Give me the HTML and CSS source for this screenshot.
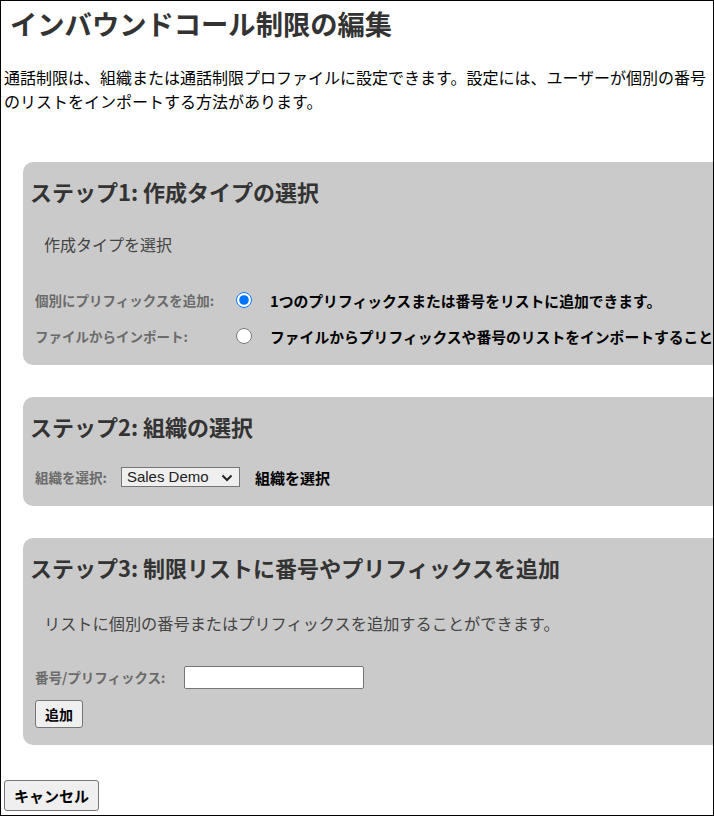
FILE: index.html
```html
<!DOCTYPE html>
<html lang="ja">
<head>
  <meta charset="UTF-8">
  <meta name="viewport" content="width=device-width, initial-scale=1.0">
  <title>インバウンドコール制限の編集</title>
  <link rel="stylesheet" href="styles.css">
</head>
<body>
  <div class="frame">
    <div class="page">
      <h1 class="title">インバウンドコール制限の編集</h1>
      <p class="intro">通話制限は、組織または通話制限プロファイルに設定できます。設定には、ユーザーが個別の番号のリストをインポートする方法があります。</p>

      <section class="step">
        <h2 class="step-title">ステップ1: 作成タイプの選択</h2>
        <p class="step-desc">作成タイプを選択</p>
        <div class="choices">
          <label class="choice">
            <span class="field-label">個別にプリフィックスを追加:</span>
            <input type="radio" name="create-type" checked>
            <span class="choice-text">1つのプリフィックスまたは番号をリストに追加できます。</span>
          </label>
          <label class="choice">
            <span class="field-label">ファイルからインポート:</span>
            <input type="radio" name="create-type">
            <span class="choice-text">ファイルからプリフィックスや番号のリストをインポートすることができます。</span>
          </label>
        </div>
      </section>

      <section class="step">
        <h2 class="step-title">ステップ2: 組織の選択</h2>
        <div class="field-row org-row">
          <label class="field-label" for="org-select">組織を選択:</label>
          <div class="select-wrap">
            <select id="org-select" class="org-select">
              <option>Sales Demo</option>
            </select>
            <svg class="select-arrow" width="12" height="8" viewBox="0 0 12 8">
              <path d="M1.5 1.5 L6 6 L10.5 1.5" fill="none" stroke="#222" stroke-width="2"/>
            </svg>
          </div>
          <span class="hint">組織を選択</span>
        </div>
      </section>

      <section class="step">
        <h2 class="step-title">ステップ3: 制限リストに番号やプリフィックスを追加</h2>
        <p class="step-desc step-desc-wide">リストに個別の番号またはプリフィックスを追加することができます。</p>
        <div class="field-row number-row">
          <label class="field-label" for="number-input">番号/プリフィックス:</label>
          <input type="text" id="number-input" class="text-input">
        </div>
        <button class="btn btn-add">追加</button>
      </section>

      <button class="btn btn-cancel">キャンセル</button>
    </div>
  </div>
</body>
</html>
```

FILE: styles.css
```css
body {
  margin: 0px;
  font-family: "Noto Sans CJK JP", "Noto Sans", sans-serif;
  color: #000;
}
.frame {
  border: 1px solid #000;
  height: 814px;
  overflow: hidden;
}
.page {
  width: 760px;
}
.title {
  margin: 4px 0 0 9px;
  font-size: 27.3px;
  line-height: 36px;
  font-weight: bold;
  color: #333;
}
.intro {
  width: 712px;
  margin: 24px 0 0 3px;
  font-size: 16px;
  line-height: 24px;
}
.step {
  background-color: #cacaca;
  border-radius: 10px 0 0 10px;
  margin: 49px 0 0 22px;
  padding: 14px 0 17px 7px;
}
.step + .step {
  margin-top: 32px;
}
.step-title {
  margin: 0;
  font-size: 22px;
  line-height: 30px;
  font-weight: bold;
  color: #333;
  white-space: nowrap;
}
.step-desc {
  margin: 26px 0 0 14px;
  font-size: 16px;
  line-height: 24px;
  color: #444;
}
.step-desc-wide {
  margin-top: 29px;
  font-size: 16.2px;
}
.choices {
  margin-top: 32px;
  padding-left: 5px;
  display: flex;
  flex-direction: column;
  gap: 12px;
}
.choice {
  display: flex;
  align-items: center;
  height: 24px;
  white-space: nowrap;
}
.choice .field-label {
  flex: 0 0 201px;
}
.choice input {
  flex: 0 0 16px;
  width: 16px;
  height: 16px;
  margin: 0 18px 0 0;
}
.choice-text {
  font-size: 14.8px;
  font-weight: bold;
}
.field-label {
  font-size: 13.5px;
  font-weight: bold;
  color: #6b6b6b;
  white-space: nowrap;
}
.field-row {
  display: flex;
  align-items: center;
  gap: 14px;
  height: 24px;
  padding-left: 5px;
}
.org-row {
  margin-top: 24px;
}
.select-wrap {
  position: relative;
  display: flex;
}
.org-select {
  appearance: none;
  width: 119px;
  height: 20px;
  margin: 0;
  padding: 0 0 0 5px;
  font-family: "Liberation Sans", Arial, sans-serif;
  font-size: 15px;
  line-height: 18px;
  background-color: #efefef;
  border: 1px solid #767676;
  border-radius: 0;
  color: #222;
}
.select-arrow {
  position: absolute;
  right: 7px;
  top: 7px;
  pointer-events: none;
}
.hint {
  margin-left: 1px;
  font-size: 15px;
  font-weight: bold;
}
.number-row {
  margin-top: 30px;
  gap: 19px;
}
.text-input {
  box-sizing: border-box;
  width: 180px;
  height: 23px;
  margin: 0;
  border: 1px solid #767676;
  border-radius: 2px;
  background-color: white;
}
.btn {
  box-sizing: border-box;
  background-color: #efefef;
  border: 1px solid #767676;
  border-radius: 3px;
  font-family: "Noto Sans CJK JP", sans-serif;
  font-weight: bold;
  color: #000;
  padding: 0;
  cursor: pointer;
}
.btn-add {
  display: block;
  width: 48px;
  height: 28px;
  margin: 11px 0 0 5px;
  font-size: 14px;
}
.btn-cancel {
  display: block;
  width: 95px;
  height: 31px;
  margin: 35px 0 0 3px;
  font-size: 15px;
}
```
